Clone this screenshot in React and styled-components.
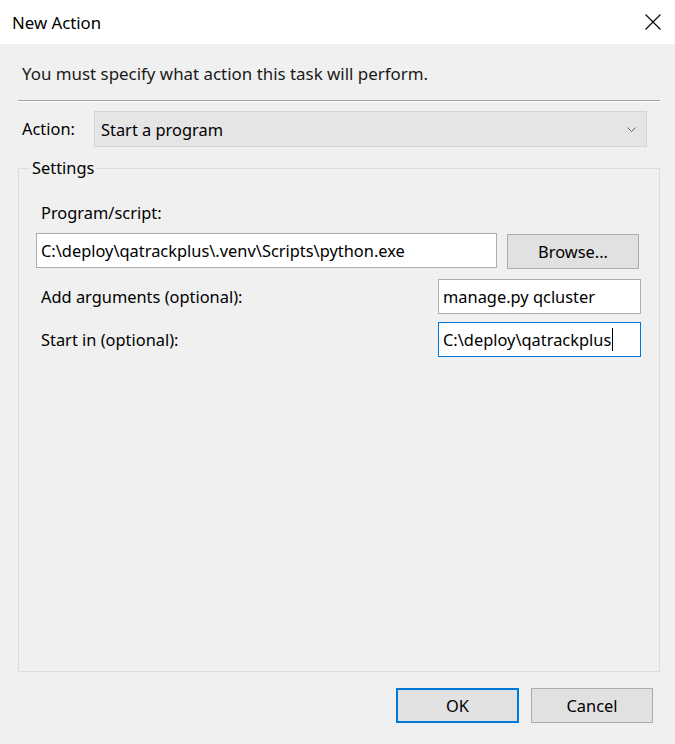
import React from 'react';
import styled, { createGlobalStyle } from 'styled-components';

const GlobalStyle = createGlobalStyle`
  html, body {
    margin: 0;
    padding: 0;
    background: #f0f0f0;
  }
  body {
    font-family: "Noto Sans", "Open Sans", sans-serif;
    color: #000;
  }
`;

const Window = styled.div`
  width: 675px;
  height: 744px;
  display: flex;
  flex-direction: column;
  background: #f0f0f0;
  overflow: hidden;
`;

const TitleBar = styled.div`
  height: 44px;
  flex-shrink: 0;
  background: #fff;
  display: flex;
  align-items: center;
  justify-content: space-between;
  padding: 0 14px 0 12px;
  font-size: 16.8px;
`;

const CloseIcon = () => (
  <svg width="16" height="16" viewBox="0 0 16 16">
    <path d="M0.5 0.5 L15.5 15.5 M15.5 0.5 L0.5 15.5" stroke="#000" strokeWidth="1.1" fill="none" />
  </svg>
);

const Body = styled.div`
  flex: 1;
  display: flex;
  flex-direction: column;
  padding: 0 15px 0 18px;
  font-size: 16.4px;
`;

const Instruction = styled.div`
  margin: 19px 0 0 4px;
  line-height: 22px;
  font-size: 16.9px;
  color: #1a1a1a;
`;

const Separator = styled.div`
  margin-top: 15px;
  border-top: 1px solid #a0a0a0;
  border-bottom: 1px solid #fff;
`;

const ActionRow = styled.div`
  display: flex;
  align-items: center;
  margin-top: 9px;
`;

const Label = styled.span`
  box-sizing: border-box;
  line-height: 22px;
  padding-left: ${({ $indent }) => $indent || 0}px;
  width: ${({ $width }) => ($width ? `${$width}px` : 'auto')};
  flex-shrink: 0;
`;

const Combo = styled.div`
  flex: 1;
  margin-right: 13px;
  height: 36px;
  box-sizing: border-box;
  background: #e5e5e5;
  border: 1px solid #d4d4d4;
  display: flex;
  align-items: center;
  justify-content: space-between;
  padding: 0 10px 0 6px;
`;

const Chevron = () => (
  <svg width="9" height="5" viewBox="0 0 9 5">
    <path d="M0.5 0.5 L4.5 4.5 L8.5 0.5" stroke="#606060" strokeWidth="1" fill="none" />
  </svg>
);

const Group = styled.fieldset`
  margin: 10px 0 0 0;
  padding: 0 18px 0 17px;
  border: 1px solid #dcdcdc;
  min-width: 0;
  height: 515px;
  box-sizing: border-box;
  flex-shrink: 0;
`;

const Legend = styled.legend`
  padding: 0 2px;
  margin-left: -6px;
  line-height: 22px;
`;

const FieldLabel = styled.div`
  margin-top: ${({ $top }) => $top}px;
  padding-left: 5px;
  line-height: 22px;
`;

const Row = styled.div`
  display: flex;
  align-items: center;
  justify-content: space-between;
  margin-top: ${({ $top }) => $top}px;
`;

const TextBox = styled.div`
  width: ${({ $width }) => $width}px;
  height: 35px;
  box-sizing: border-box;
  background: #fff;
  border: 1px solid ${({ $focused }) => ($focused ? '#0078d7' : '#adadad')};
  display: flex;
  align-items: center;
  padding-left: 4px;
  white-space: nowrap;
  overflow: hidden;
`;

const Caret = styled.span`
  display: inline-block;
  width: 1px;
  height: 23px;
  background: #000;
  margin-left: 1px;
`;

const Button = styled.div`
  width: ${({ $width }) => $width}px;
  height: 35px;
  box-sizing: border-box;
  background: #e1e1e1;
  border: ${({ $default }) => ($default ? '2px solid #0078d7' : '1px solid #adadad')};
  display: flex;
  align-items: center;
  justify-content: center;
  margin-top: ${({ $top }) => $top || 0}px;
  margin-right: ${({ $right }) => $right || 0}px;
`;

const Footer = styled.div`
  display: flex;
  justify-content: flex-end;
  gap: 12px;
  margin-top: 16px;
  padding-right: 7px;
`;

export default function App() {
  return (
    <>
      <GlobalStyle />
      <Window>
        <TitleBar>
          <span>New Action</span>
          <CloseIcon />
        </TitleBar>
        <Body>
          <Instruction>You must specify what action this task will perform.</Instruction>
          <Separator />
          <ActionRow>
            <Label $indent={4} $width={76}>Action:</Label>
            <Combo>
              <span>Start a program</span>
              <Chevron />
            </Combo>
          </ActionRow>
          <Group>
            <Legend>Settings</Legend>
            <FieldLabel $top={23}>Program/script:</FieldLabel>
            <Row $top={8}>
              <TextBox $width={461}>C:\deploy\qatrackplus\.venv\Scripts\python.exe</TextBox>
              <Button $width={132} $top={2} $right={2}>Browse...</Button>
            </Row>
            <Row $top={10}>
              <FieldLabel $top={0}>Add arguments (optional):</FieldLabel>
              <TextBox $width={203}>manage.py qcluster</TextBox>
            </Row>
            <Row $top={8}>
              <FieldLabel $top={0}>Start in (optional):</FieldLabel>
              <TextBox $width={203} $focused>
                C:\deploy\qatrackplus<Caret />
              </TextBox>
            </Row>
          </Group>
          <Footer>
            <Button $width={123} $default>OK</Button>
            <Button $width={122}>Cancel</Button>
          </Footer>
        </Body>
      </Window>
    </>
  );
}
